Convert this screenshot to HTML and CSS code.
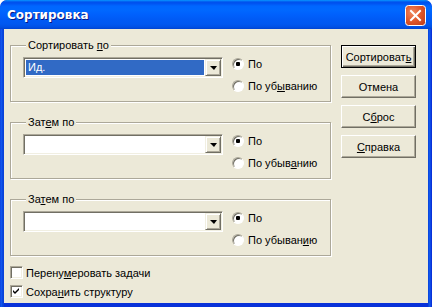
FILE: index.html
```html
<!DOCTYPE html>
<html lang="ru">
<head>
<meta charset="utf-8">
<title>Сортировка</title>
<link rel="stylesheet" href="styles.css">
</head>
<body>
<div class="window">
  <div class="titlebar">
    <span class="title">Сортировка</span>
    <span class="close">
      <svg width="21" height="21" viewBox="0 0 21 21">
        <defs>
          <radialGradient id="cg" cx="0.35" cy="0.35" r="0.8">
            <stop offset="0" stop-color="#F08A62"/>
            <stop offset="0.55" stop-color="#E0562A"/>
            <stop offset="1" stop-color="#C4401A"/>
          </radialGradient>
        </defs>
        <rect x="0.5" y="0.5" width="20" height="20" rx="3" fill="url(#cg)" stroke="#fff"/>
        <path d="M6 6 L15 15 M15 6 L6 15" stroke="#fff" stroke-width="2" stroke-linecap="square"/>
      </svg>
    </span>
  </div>
  <div class="client">
    <div class="main">
      <fieldset class="group">
        <legend>Сортировать <u>п</u>о</legend>
        <div class="row">
          <div class="combo">
            <div class="field"><span class="sel">Ид.</span></div>
            <div class="drop"><span class="tri"></span></div>
          </div>
          <div class="radios">
            <div class="radio"><span class="circle on"></span><span>По</span></div>
            <div class="radio"><span class="circle"></span><span>По уб<u>ы</u>ванию</span></div>
          </div>
        </div>
      </fieldset>
      <fieldset class="group">
        <legend>Зат<u>е</u>м по</legend>
        <div class="row">
          <div class="combo">
            <div class="field"></div>
            <div class="drop"><span class="tri"></span></div>
          </div>
          <div class="radios">
            <div class="radio"><span class="circle on"></span><span>По</span></div>
            <div class="radio"><span class="circle"></span><span>По убыв<u>а</u>нию</span></div>
          </div>
        </div>
      </fieldset>
      <fieldset class="group">
        <legend>За<u>т</u>ем по</legend>
        <div class="row">
          <div class="combo">
            <div class="field"></div>
            <div class="drop"><span class="tri"></span></div>
          </div>
          <div class="radios">
            <div class="radio"><span class="circle on"></span><span>По</span></div>
            <div class="radio"><span class="circle"></span><span>По убыван<u>и</u>ю</span></div>
          </div>
        </div>
      </fieldset>
      <div class="checks">
        <div class="check"><span class="box"></span><span>Перену<u>м</u>еровать задачи</span></div>
        <div class="check"><span class="box">
          <svg width="7" height="7" viewBox="0 0 7 7"><path d="M0 2 L2 4 L6 0 L6 2 L2 6 L0 4 Z" fill="#000"/></svg>
        </span><span>Сохра<u>н</u>ить структуру</span></div>
      </div>
    </div>
    <div class="buttons">
      <div class="btn default">Сортироват<u>ь</u></div>
      <div class="btn">Отмена</div>
      <div class="btn">С<u>б</u>рос</div>
      <div class="btn"><u>С</u>правка</div>
    </div>
  </div>
</div>
</body>
</html>
```
FILE: styles.css
```css
* { box-sizing: border-box; }
html, body { margin: 0; padding: 0; }
body {
  font-family: "Liberation Sans", Arial, sans-serif;
  font-size: 11px;
  color: #000;
  background: #fff;
}
u { text-decoration: underline; text-underline-offset: 1px; }

.window {
  width: 432px;
  height: 307px;
  display: flex;
  flex-direction: column;
  background: linear-gradient(to right, #0831D9 0, #1360F0 1px, #0A4BE6 2px, #0842D9 3px, #0842D9 428px, #0A4BE6 429px, #1360F0 430px, #0831D9 431px);
  border-radius: 7px 7px 0 0;
  overflow: hidden;
}

.titlebar {
  height: 29px;
  flex: none;
  display: flex;
  align-items: center;
  justify-content: space-between;
  padding: 0 6px 0 7px;
  border-radius: 7px 7px 0 0;
  background: linear-gradient(to bottom,
    #0997FF 0, #0053EE 2px, #0050EE 3px, #0066FF 6px, #0068FF 10px,
    #0060FC 15px, #005AF4 20px, #0058F0 24px, #0050E5 27px, #0043D0 29px);
}
.title {
  color: #fff;
  font-family: "DejaVu Sans", sans-serif;
  font-weight: bold;
  font-size: 12px;
  text-shadow: 1px 1px 0 #0A1883;
  margin-top: 1px;
}
.close { display: flex; width: 21px; height: 21px; margin-top: 2px; }

.client {
  flex: 1;
  margin: 0 4px 4px;
  background: #ECE9D8;
  display: flex;
  padding: 10px 0 0 6px;
  box-shadow: 0 4px 0 #0831D9;
}

.main { width: 322px; display: flex; flex-direction: column; }

.group {
  margin: 0 0 14px;
  width: 321px;
  min-width: 0;
  padding: 4px 6px 7px 12px;
  border: 1px solid #ACA899;
  box-shadow: inset 1px 1px 0 #fff, 1px 1px 0 #fff;
}
.group legend {
  padding: 0 2px;
  margin-left: 3px;
  line-height: 13px;
  background: #ECE9D8;
}

.row { display: flex; gap: 9px; align-items: flex-start; }

.combo {
  width: 200px;
  height: 21px;
  margin-top: 1px;
  display: flex;
  border: 1px solid;
  border-color: #ACA899 #fff #fff #ACA899;
  box-shadow: inset 1px 1px 0 #716F64, inset -1px -1px 0 #F1EFE2;
  background: #fff;
  padding: 1px;
}
.field { flex: 1; padding: 1px; display: flex; }
.sel {
  flex: 1;
  background: #316AC5;
  color: #fff;
  padding-left: 2px;
  line-height: 15px;
}
.drop {
  width: 16px;
  flex: none;
  background: #ECE9D8;
  border: 1px solid;
  border-color: #F1EFE2 #716F64 #716F64 #F1EFE2;
  box-shadow: inset 1px 1px 0 #fff, inset -1px -1px 0 #ACA899;
  display: flex;
  align-items: center;
  justify-content: center;
}
.tri {
  width: 0; height: 0;
  border-left: 4px solid transparent;
  border-right: 3px solid transparent;
  border-top: 4px solid #000;
  margin-top: 1px;
}

.radios { display: flex; flex-direction: column; gap: 6px; }
.radio { display: flex; align-items: center; height: 16px; gap: 4px; }
.circle {
  width: 12px; height: 12px;
  border-radius: 50%;
  border: 1px solid;
  border-color: #ACA899 #fff #fff #ACA899;
  box-shadow: inset 1px 1px 0 #716F64;
  background: #fff;
  display: flex;
  align-items: center;
  justify-content: center;
}
.circle.on::after {
  content: "";
  width: 4px; height: 4px;
  border-radius: 1px;
  background: #000;
}

.checks { display: flex; flex-direction: column; gap: 6px; margin-top: -4px; }
.check { display: flex; align-items: center; height: 13px; gap: 3px; }
.box {
  width: 13px; height: 13px;
  border: 1px solid;
  border-color: #ACA899 #fff #fff #ACA899;
  box-shadow: inset 1px 1px 0 #716F64, inset -1px -1px 0 #F1EFE2;
  background: #fff;
  display: flex;
  align-items: center;
  justify-content: center;
}

.buttons {
  margin-left: 9px;
  padding-top: 6px;
  display: flex;
  flex-direction: column;
  gap: 7px;
}
.btn {
  width: 75px;
  height: 23px;
  display: flex;
  align-items: center;
  justify-content: center;
  background: #ECE9D8;
  border: 1px solid;
  border-color: #fff #716F64 #716F64 #fff;
  box-shadow: inset -1px -1px 0 #ACA899;
}
.btn.default {
  border-color: #000;
  box-shadow: inset 1px 1px 0 #fff, inset -1px -1px 0 #716F64, inset -2px -2px 0 #ACA899;
}
```
